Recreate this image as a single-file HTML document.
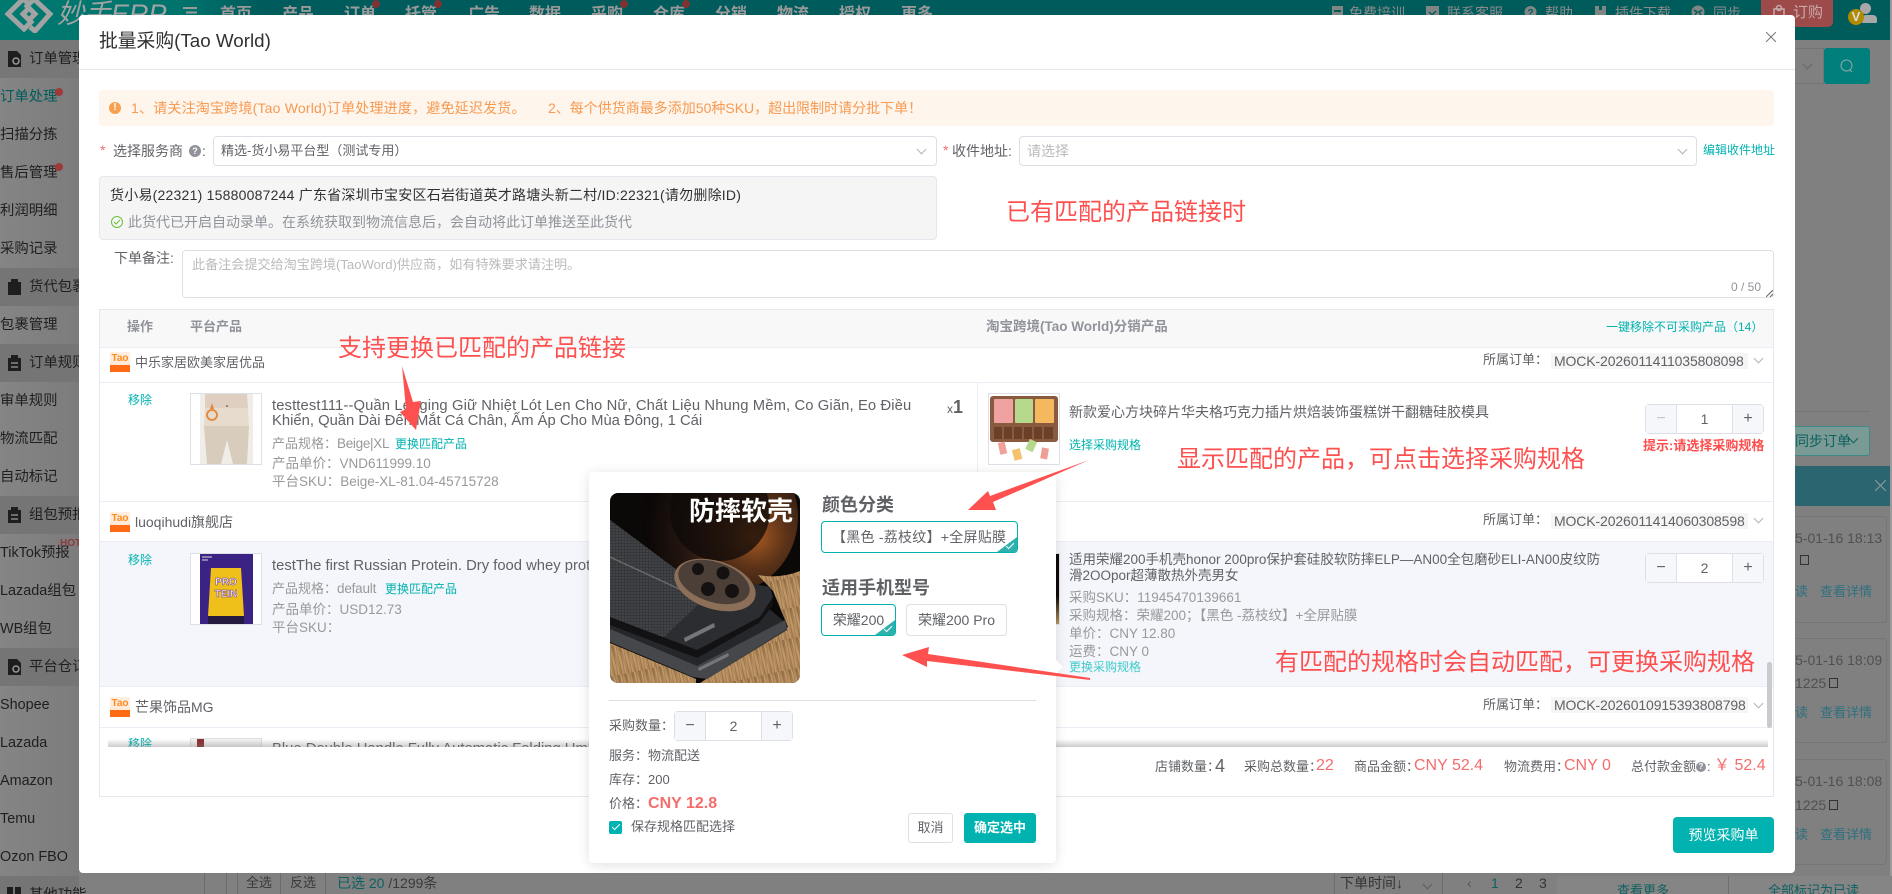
<!DOCTYPE html>
<html lang="zh"><head><meta charset="utf-8"><title>批量采购(Tao World)</title>
<style>
html,body{margin:0;padding:0;width:1892px;height:894px;overflow:hidden;background:#808080}
*{box-sizing:border-box}
body{font-family:"Liberation Sans","Noto Sans CJK SC",sans-serif;position:relative;font-size:14px;color:#606266}
.t{position:absolute;white-space:nowrap;line-height:20px}
.b{position:absolute}
.side{font-size:14.400px;color:#1f1f1f;left:0}
.nav{font-size:16px;color:#9a9a9a;font-weight:700;top:5px}
.dot{position:absolute;width:8px;height:8px;border-radius:50%;background:#7f3232;top:0}
.topi{font-size:14px;color:#8b8b8b;top:3px}
.teal{color:#00b3b0}.gray{color:#999}.red{color:#ff5050}
.g{font-size:13.500px}
.note{font-size:24px;color:#ff5050;line-height:32px;position:absolute;white-space:nowrap;z-index:30}
.tag{position:absolute;background:#f5f5f5;height:16px;line-height:16px;padding-left:3px;font-size:14px;color:#606266;white-space:nowrap;width:197px;left:1551px;letter-spacing:-.12px}
.step{position:absolute;width:119px;height:30px;border:1px solid #dcdfe6;border-radius:4px;background:#fff;text-align:center;line-height:28px;font-size:14px;color:#606266}
.step i{position:absolute;top:0;width:31px;height:28px;background:#f5f7fa;font-style:normal;font-size:16px;color:#606266}
.step i.l{left:0;border-right:1px solid #dcdfe6}.step i.r{right:0;width:31px;border-left:1px solid #dcdfe6}
.tb{position:absolute;width:20px;height:20px;left:110px;background:linear-gradient(#fff1e2 0,#ffe8d6 66%,#ff6a14 66%);overflow:hidden;text-align:center;font:700 10px/13px "Liberation Sans",sans-serif;color:#ff8a20}
.hline{position:absolute;left:100px;width:1673px;height:1px;background:#ebeef5}
.chev{position:absolute;width:7px;height:7px;border-right:1px solid #b0b3b8;border-bottom:1px solid #b0b3b8;transform:rotate(45deg)}
.pic{position:absolute;width:72px;height:72px;border:1px solid #dcdfe6;background:#fff;overflow:hidden}
.card{position:absolute;left:1700px;width:187px;height:107px;border:1px solid #767676;border-radius:4px}
.opt{position:absolute;height:32px;border:1px solid #dcdfe6;border-radius:4px;background:#fff;line-height:30px;font-size:14px;color:#606266;text-align:center;white-space:nowrap;overflow:hidden}
.opt.on{border-color:#00b3b0}
.opt.on:after{content:"";position:absolute;right:0;bottom:0;width:20px;height:15px;background:#2eb0ac;clip-path:polygon(100% 0,100% 100%,0 100%)}
.opt.on:before{content:"";position:absolute;right:3px;bottom:5px;width:7px;height:3px;border-left:1.500px solid #fff;border-bottom:1.500px solid #fff;transform:rotate(-45deg);z-index:2}
</style></head><body>

<!-- dimmed app background -->
<div class="b" style="left:0;top:0;width:1892px;height:40px;background:linear-gradient(90deg,#007a70 0,#00736c 180px,#005c5c 260px,#005b5b 100%)"></div>
<svg class="b" style="left:4px;top:-3px" width="50" height="36" viewBox="0 0 50 36"><path d="M24 6 L19 2 L4 17 L20 32 L27 25 L19 17 L24 12 M26 30 L31 34 L46 17 L30 2 L23 9 L31 17 L26 22" fill="none" stroke="#a3a3a3" stroke-width="5"/></svg>
<div class="t" style="left:57px;top:-2px;font-size:27px;line-height:32px;color:#a3a3a3;font-style:italic">妙手ERP</div>
<svg class="b" style="left:183px;top:7px" width="14" height="12"><path d="M0 1h14M3 5.500h11M0 10h14" stroke="#9a9a9a" stroke-width="2"/></svg>
<div class="t nav" style="left:220px">首页</div><div class="t nav" style="left:282px">产品</div><div class="t nav" style="left:344px">订单</div><div class="t nav" style="left:405px">托管</div><div class="t nav" style="left:468px">广告</div><div class="t nav" style="left:529px">数据</div><div class="t nav" style="left:591px">采购</div><div class="t nav" style="left:653px">仓库</div><div class="t nav" style="left:715px">分销</div><div class="t nav" style="left:777px">物流</div><div class="t nav" style="left:839px">授权</div><div class="t nav" style="left:901px">更多</div>
<i class="dot" style="left:372px"></i><i class="dot" style="left:434px"></i><i class="dot" style="left:620px"></i><i class="dot" style="left:682px"></i>
<svg class="b" style="left:1331px;top:5px" width="13" height="14"><path d="M1 1h11v12H1z" fill="#808684"/><path d="M3 6h7" stroke="#005b5b" stroke-width="2"/></svg><div class="t topi" style="left:1349px">免费培训</div>
<svg class="b" style="left:1426px;top:5px" width="13" height="14"><path d="M0 1h13v12H0z" fill="#808684"/><path d="M3 7l3 3 4-4" stroke="#005b5b" fill="none" stroke-width="1.500"/></svg><div class="t topi" style="left:1447px">联系客服</div>
<svg class="b" style="left:1524px;top:5px" width="13" height="14"><circle cx="6.500" cy="7" r="6" fill="#808684"/><text x="6.500" y="11" font-size="10" font-weight="700" fill="#005b5b" text-anchor="middle" font-family="Liberation Sans">?</text></svg><div class="t topi" style="left:1545px">帮助</div>
<svg class="b" style="left:1594px;top:5px" width="13" height="14"><path d="M1 1h11v12H1z" fill="#808684"/><path d="M5 1h3v4H5z" fill="#005b5b"/></svg><div class="t topi" style="left:1615px">插件下载</div>
<svg class="b" style="left:1691px;top:5px" width="14" height="14"><circle cx="7" cy="7" r="6.500" fill="#808684"/><path d="M3 5l3 2-2 3M11 5L8 7l2 3" stroke="#005b5b" fill="none" stroke-width="1.500"/></svg><div class="t topi" style="left:1713px">同步</div>
<div class="b" style="left:1761px;top:-4px;width:72px;height:31px;background:#9c4a4a;border-radius:5px"></div>
<div class="t" style="left:1793px;top:3px;font-size:15px;color:#c9a8a8">订购</div>
<svg class="b" style="left:1773px;top:4px" width="12" height="15"><path d="M1 5h10v9H1z" fill="none" stroke="#c9a8a8" stroke-width="1.500"/><circle cx="6" cy="4" r="2.500" fill="none" stroke="#c9a8a8" stroke-width="1.500"/></svg>
<div class="b" style="left:1860px;top:3px;width:11px;height:11px;background:#a8a8a8;border-radius:50%"></div>
<div class="b" style="left:1862px;top:15px;width:15px;height:8px;background:#a8a8a8;border-radius:4px 4px 1px 1px"></div>
<div class="b" style="left:1848px;top:9px;width:16px;height:16px;background:#b28a00;border-radius:50%;text-align:center;font:700 13px/16px 'Liberation Sans',sans-serif;color:#ddd">V</div>

<!-- sidebar -->
<div class="b" style="left:0;top:40px;width:79px;height:854px;background:linear-gradient(90deg,#858585,#7c7c7c)"></div>
<div class="b" style="left:0;top:40px;width:79px;height:38px;background:#777"></div>
<div class="b" style="left:0;top:268px;width:79px;height:38px;background:#757575"></div>
<div class="b" style="left:0;top:344px;width:79px;height:38px;background:#757575"></div>
<div class="b" style="left:0;top:496px;width:79px;height:38px;background:#757575"></div>
<div class="b" style="left:0;top:648px;width:79px;height:38px;background:#757575"></div>
<div class="b" style="left:0;top:876px;width:79px;height:18px;background:#757575"></div>
<svg class="b" style="left:7px;top:51px" width="15" height="16"><path d="M1 0h9l4 4v12H1z" fill="#1e1e1e"/><circle cx="9" cy="10" r="3" fill="none" stroke="#999" stroke-width="1.500"/></svg>
<svg class="b" style="left:7px;top:279px" width="15" height="16"><path d="M1 3h13v13H1z M4 0h7v3H4z" fill="#1e1e1e"/></svg>
<svg class="b" style="left:7px;top:355px" width="15" height="16"><path d="M1 3h13v13H1z M4 0h7v3H4z" fill="#1e1e1e"/><path d="M4 8h7M4 12h7" stroke="#888" stroke-width="1.500"/></svg>
<svg class="b" style="left:7px;top:507px" width="15" height="16"><path d="M1 3h13v13H1z M4 0h7v3H4z" fill="#1e1e1e"/><path d="M4 8h7M4 12h7" stroke="#888" stroke-width="1.500"/></svg>
<svg class="b" style="left:7px;top:659px" width="15" height="16"><path d="M1 0h9l4 4v12H1z" fill="#1e1e1e"/><circle cx="9" cy="10" r="3" fill="none" stroke="#999" stroke-width="1.500"/></svg>
<svg class="b" style="left:7px;top:887px" width="15" height="7"><path d="M0 0h6v7H0zM8 0h6v7H8z" fill="#1e1e1e"/></svg>
<div class="t side" style="left:29px;top:49px">订单管理</div>
<div class="t side" style="top:87px;color:#005b5b">订单处理</div><i class="dot" style="left:55px;top:88px;background:#a03a3a"></i>
<div class="t side" style="top:125px">扫描分拣</div>
<div class="t side" style="top:163px">售后管理</div><i class="dot" style="left:55px;top:163px;background:#a03a3a"></i>
<div class="t side" style="top:201px">利润明细</div>
<div class="t side" style="top:239px">采购记录</div>
<div class="t side" style="left:29px;top:277px">货代包裹</div>
<div class="t side" style="top:315px">包裹管理</div>
<div class="t side" style="left:29px;top:353px">订单规则</div>
<div class="t side" style="top:391px">审单规则</div>
<div class="t side" style="top:429px">物流匹配</div>
<div class="t side" style="top:467px">自动标记</div>
<div class="t side" style="left:29px;top:505px">组包预报</div>
<div class="t side" style="top:543px">TikTok预报</div><div class="t" style="left:60px;top:534px;font-size:10px;font-weight:700;color:#8a3a3a;width:19px;overflow:hidden">HOT</div>
<div class="t side" style="top:581px">Lazada组包</div>
<div class="t side" style="top:619px">WB组包</div>
<div class="t side" style="left:29px;top:657px">平台仓订</div>
<div class="t side" style="top:695px">Shopee</div>
<div class="t side" style="top:733px">Lazada</div>
<div class="t side" style="top:771px">Amazon</div>
<div class="t side" style="top:809px">Temu</div>
<div class="t side" style="top:847px">Ozon FBO</div>
<div class="t side" style="left:29px;top:885px">其他功能</div>

<!-- right background -->
<div class="b" style="left:1795px;top:48px;width:29px;height:36px;border:1px solid #747474;border-left:0"></div>
<i class="chev" style="left:1804px;top:61px;border-color:#666"></i>
<div class="b" style="left:1824px;top:48px;width:46px;height:36px;background:#007f7c;border-radius:3px"></div>
<svg class="b" style="left:1840px;top:59px" width="14" height="15"><circle cx="6.500" cy="6.500" r="5.500" fill="none" stroke="#8aa" stroke-width="1"/><path d="M10 11l2 2" stroke="#8aa"/></svg>
<div class="b" style="left:1795px;top:411px;width:75px;height:1px;background:#747474"></div>
<div class="b" style="left:1795px;top:426px;width:75px;height:30px;background:#7a9a96;border:1px solid #3f8a88;border-left:0;border-radius:0 3px 3px 0"></div>
<div class="t" style="left:1795px;top:431px;font-size:14px;color:#0f5f5f">同步订单</div>
<i class="chev" style="left:1850px;top:435px;border-color:#0f5f5f"></i>
<div class="b" style="left:1795px;top:466px;width:95px;height:40px;background:#2a6570"></div>
<svg class="b" style="left:1875px;top:480px" width="11" height="11"><path d="M0 0l11 11M11 0L0 11" stroke="#8f9f9f"/></svg>
<div class="card" style="top:516px"></div><div class="card" style="top:638px;height:105px"></div><div class="card" style="top:759px;height:106px"></div>
<div class="t" style="left:1795px;top:528px;color:#505050">5-01-16 18:13</div>
<div class="b" style="left:1800px;top:555px;width:9px;height:10px;border:1px solid #333"></div>
<div class="t" style="left:1795px;top:582px;font-size:13px;color:#2f6f80">读</div><div class="t" style="left:1820px;top:582px;font-size:13px;color:#2f6f80">查看详情</div>
<div class="t" style="left:1795px;top:650px;color:#505050">5-01-16 18:09</div>
<div class="t" style="left:1795px;top:673px;color:#505050">1225</div><div class="b" style="left:1829px;top:678px;width:9px;height:10px;border:1px solid #333"></div>
<div class="t" style="left:1795px;top:703px;font-size:13px;color:#2f6f80">读</div><div class="t" style="left:1820px;top:703px;font-size:13px;color:#2f6f80">查看详情</div>
<div class="t" style="left:1795px;top:771px;color:#505050">5-01-16 18:08</div>
<div class="t" style="left:1795px;top:795px;color:#505050">1225</div><div class="b" style="left:1829px;top:800px;width:9px;height:10px;border:1px solid #333"></div>
<div class="t" style="left:1795px;top:825px;font-size:13px;color:#2f6f80">读</div><div class="t" style="left:1820px;top:825px;font-size:13px;color:#2f6f80">查看详情</div>
<div class="b" style="left:1890px;top:0;width:2px;height:894px;background:#9a9a9a"></div>

<!-- bottom bar -->
<div class="b" style="left:204px;top:873px;width:1px;height:21px;background:#6c6c6c"></div><div class="b" style="left:226px;top:873px;width:1px;height:21px;background:#6c6c6c"></div>
<div class="b" style="left:237px;top:873px;width:44px;height:21px;border-left:1px solid #6c6c6c;border-right:1px solid #6c6c6c"></div>
<div class="b" style="left:281px;top:873px;width:45px;height:21px;border-right:1px solid #6c6c6c"></div>
<div class="t" style="left:246px;top:873px;font-size:13px;color:#3a3a3a">全选</div><div class="t" style="left:290px;top:873px;font-size:13px;color:#3a3a3a">反选</div>
<div class="t" style="left:337px;top:873px;color:#0f6060">已选 20 <span style="color:#3a3a3a">/1299条</span></div>
<div class="t" style="left:1340px;top:873px;color:#333">下单时间↓</div><i class="chev" style="left:1424px;top:881px;border-color:#5c5c5c"></i>
<div class="b" style="left:1334px;top:873px;width:1px;height:21px;background:#6c6c6c"></div><div class="b" style="left:1442px;top:873px;width:1px;height:21px;background:#6c6c6c"></div>
<div class="t" style="left:1467px;top:873px;color:#555">&lsaquo;</div><div class="t" style="left:1491px;top:873px;color:#0f6060">1</div><div class="t" style="left:1515px;top:873px;color:#333">2</div><div class="t" style="left:1539px;top:873px;color:#333">3</div>
<div class="b" style="left:1557px;top:876px;width:335px;height:18px;background:#858585"></div><div class="b" style="left:1728px;top:876px;width:1px;height:18px;background:#707070"></div>
<div class="t" style="left:1617px;top:881px;font-size:13px;color:#0f6060">查看更多</div><div class="t" style="left:1768px;top:881px;font-size:13px;color:#0f6060">全部标记为已读</div>

<!-- modal -->
<div class="b" style="left:79px;top:15px;width:1716px;height:858px;background:#fff;border-radius:4px"></div>
<div class="t" style="left:99px;top:29px;font-size:18.800px;line-height:24px;color:#303133">批量采购(Tao World)</div>
<div class="b" style="left:79px;top:69px;width:1716px;height:1px;background:#e4e7ed"></div>
<svg class="b" style="left:1766px;top:32px" width="10" height="10"><path d="M0 0l10 10M10 0L0 10" stroke="#777"/></svg>

<div class="b" style="left:99px;top:90px;width:1675px;height:36px;background:#fef5ec;border-radius:3px"></div>
<div class="b" style="left:109px;top:102px;width:12px;height:12px;border-radius:50%;background:#f7a04f;color:#fff;text-align:center;font:700 10px/12px 'Liberation Sans',sans-serif">!</div>
<div class="t" style="left:131px;top:98px;color:#f79a52;letter-spacing:.2px">1、请关注淘宝跨境(Tao World)订单处理进度，避免延迟发货。</div>
<div class="t" style="left:548px;top:98px;color:#f79a52">2、每个供货商最多添加50种SKU，超出限制时请分批下单！</div>

<div class="t red" style="left:100px;top:140px;color:#f56c6c">*</div>
<div class="t" style="left:113px;top:141px;color:#606266">选择服务商</div>
<div class="b" style="left:189px;top:145px;width:12px;height:12px;background:#909399;border-radius:50%;color:#fff;text-align:center;font:700 9px/12px 'Liberation Sans',sans-serif">?</div>
<div class="t" style="left:202px;top:141px">:</div>
<div class="b" style="left:213px;top:136px;width:724px;height:30px;border:1px solid #dcdfe6;border-radius:4px;background:#fff"></div>
<div class="t" style="left:221px;top:141px;color:#606266;font-size:13px">精选-货小易平台型（测试专用）</div><i class="chev" style="left:918px;top:146px"></i>
<div class="t" style="left:943px;top:140px;color:#f56c6c">*</div>
<div class="t" style="left:952px;top:141px;color:#606266">收件地址:</div>
<div class="b" style="left:1019px;top:136px;width:678px;height:30px;border:1px solid #dcdfe6;border-radius:4px;background:#fff"></div>
<div class="t" style="left:1027px;top:141px;color:#bbb">请选择</div><i class="chev" style="left:1679px;top:146px"></i>
<div class="t teal" style="left:1703px;top:140px;font-size:12px">编辑收件地址</div>

<div class="b" style="left:99px;top:176px;width:838px;height:64px;background:#f5f5f5;border:1px solid #e4e7ed;border-radius:4px"></div>
<div class="t" style="left:110px;top:185px;color:#303133;font-size:14px;letter-spacing:.22px">货小易(22321) 15880087244 广东省深圳市宝安区石岩街道英才路塘头新二村/ID:22321(请勿删除ID)</div>
<svg class="b" style="left:111px;top:216px" width="12" height="12"><circle cx="6" cy="6" r="5.500" fill="none" stroke="#67c23a"/><path d="M3 6l2 2 4-4" fill="none" stroke="#67c23a"/></svg>
<div class="t" style="left:128px;top:212px;color:#909399;font-size:14px">此货代已开启自动录单。在系统获取到物流信息后，会自动将此订单推送至此货代</div>

<div class="t" style="left:114px;top:248px;color:#606266">下单备注:</div>
<div class="b" style="left:182px;top:250px;width:1592px;height:48px;border:1px solid #dcdfe6;border-radius:4px"></div>
<div class="t" style="left:192px;top:255px;color:#bbb;font-size:13.100px">此备注会提交给淘宝跨境(TaoWord)供应商，如有特殊要求请注明。</div>
<div class="t" style="left:1731px;top:277px;font-size:12px;color:#909399">0 / 50</div>
<svg class="b" style="left:1766px;top:290px" width="7" height="7"><path d="M0 7L7 0M4 7l3-3" stroke="#666"/></svg>

<!-- table -->
<div class="b" style="left:99px;top:309px;width:1675px;height:488px;border:1px solid #e4e7ed;overflow:hidden;background:#fff"></div>
<div class="b" style="left:100px;top:310px;width:1673px;height:37px;background:#f8f8f9"></div>
<div class="t" style="left:127px;top:317px;font-size:13px;color:#909399;font-weight:700">操作</div>
<div class="t" style="left:190px;top:317px;font-size:13px;color:#909399;font-weight:700">平台产品</div>
<div class="t" style="left:986px;top:317px;font-size:13.500px;color:#909399;font-weight:700">淘宝跨境(Tao World)分销产品</div>
<div class="t teal" style="left:1606px;top:317px;font-size:12px">一键移除不可采购产品（14）</div>
<div class="hline" style="top:347px"></div><div class="hline" style="top:382px"></div><div class="hline" style="top:501px"></div><div class="hline" style="top:541px"></div><div class="hline" style="top:686px"></div><div class="hline" style="top:727px"></div>

<!-- shop 1 -->
<div class="tb" style="top:352px">Tao</div>
<div class="t" style="left:135px;top:353px;font-size:13px">中乐家居欧美家居优品</div>
<div class="t" style="left:1483px;top:350px;font-size:13px">所属订单：</div>
<div class="tag" style="top:353px">MOCK-2026011411035808098</div><i class="chev" style="left:1755px;top:355px"></i>

<div class="t teal" style="left:128px;top:390px;font-size:12px">移除</div>
<div class="pic" style="left:190px;top:393px;"><svg width="70" height="70"><rect x="9" width="53" height="70" fill="#f0ede8"/><path d="M14 0h42l1 14H14z" fill="#dfcfc0"/><path d="M14 14h43l1 18H13z" fill="#e6dbcd"/><path d="M13 32h45l-2 38H42l-6-24-6 24H16z" fill="#d8ccbd"/><circle cx="21" cy="21" r="5" fill="none" stroke="#e5853a" stroke-width="1.800"/><path d="M21 9l2 6h-4z" fill="#e5853a"/><circle cx="36" cy="12" r="1" fill="#8a6a50"/></svg></div>
<div class="t" style="left:272px;top:396px;color:#606266;font-size:14.800px;letter-spacing:.11px">testtest111--Quần Legging Giữ Nhiệt Lót Len Cho Nữ, Chất Liệu Nhung Mềm, Co Giãn, Eo Điều</div>
<div class="t" style="left:272px;top:411px;color:#606266;font-size:14.800px">Khiển, Quần Dài Đến Mắt Cá Chân, Ấm Áp Cho Mùa Đông, 1 Cái</div>
<div class="t gray" style="left:272px;top:434px;font-size:13px">产品规格：<span style="font-size:13.500px;letter-spacing:-.3px">Beige|XL</span></div><div class="t teal" style="left:395px;top:434px;font-size:12px">更换匹配产品</div>
<div class="t gray g" style="left:272px;top:454px">产品单价：VND611999.10</div>
<div class="t gray g" style="left:272px;top:472px">平台SKU：Beige-XL-81.04-45715728</div>
<div class="t" style="left:947px;top:397px;font-size:12px">x<span style="font-size:18px;font-weight:700">1</span></div>
<div class="b" style="left:977px;top:383px;width:1px;height:118px;background:#ebeef5"></div>
<div class="pic" style="left:988px;top:393px"><svg width="70" height="70"><rect x="1" y="2" width="68" height="46" rx="3" fill="#8a5a3f"/><rect x="5" y="5" width="19" height="24" rx="1" fill="#efa2a0"/><rect x="26" y="5" width="18" height="24" rx="1" fill="#b6d98e"/><rect x="46" y="5" width="19" height="24" rx="1" fill="#f4b85e"/><path d="M5 33h8v12H5zM15 33h8v12h-8zM25 33h8v12h-8zM35 33h8v12h-8zM45 33h8v12h-8zM55 33h9v12h-9z" fill="#6b4029"/><rect x="10" y="48" width="7" height="12" fill="#f2a09a" transform="rotate(-12 14 54)"/><rect x="24" y="55" width="8" height="11" fill="#f4c36c" transform="rotate(-15 28 60)"/><rect x="38" y="46" width="8" height="11" fill="#b6d98e" transform="rotate(25 42 52)"/><rect x="52" y="54" width="7" height="11" fill="#ee9f95" transform="rotate(10 56 60)"/></svg></div>
<div class="t" style="left:1069px;top:402px;color:#606266">新款爱心方块碎片华夫格巧克力插片烘焙装饰蛋糕饼干翻糖硅胶模具</div>
<div class="t teal" style="left:1069px;top:435px;font-size:12px">选择采购规格</div>
<div class="step" style="left:1645px;top:404px">1<i class="l" style="color:#c0c4cc">−</i><i class="r">+</i></div>
<div class="t" style="left:1643px;top:436px;font-size:13px;color:#ff4d4d;font-weight:700">提示:请选择采购规格</div>

<!-- shop 2 -->
<div class="tb" style="top:512px">Tao</div>
<div class="t" style="left:135px;top:512px;font-size:14px">luoqihudi旗舰店</div>
<div class="t" style="left:1483px;top:510px;font-size:13px">所属订单：</div>
<div class="tag" style="top:513px">MOCK-2026011414060308598</div><i class="chev" style="left:1755px;top:515px"></i>
<div class="b" style="left:100px;top:542px;width:1673px;height:144px;background:#f4f6fb"></div>
<div class="t teal" style="left:128px;top:550px;font-size:12px">移除</div>
<div class="pic" style="left:190px;top:553px"><svg width="70" height="70"><rect x="9" width="53" height="70" fill="#3b2384"/><path d="M20 14h30l3 48H17z" fill="#f0c01a"/><rect x="17" y="62" width="36" height="8" fill="#241a40"/><text x="35" y="31" font-size="10" font-weight="700" fill="#f3e6ff" stroke="#5a2a90" stroke-width=".4" text-anchor="middle" font-family="Liberation Sans">PRO</text><text x="35" y="43" font-size="10" font-weight="700" fill="#f3e6ff" stroke="#5a2a90" stroke-width=".4" text-anchor="middle" font-family="Liberation Sans">TEIN</text><path d="M11 3h10M11 6h6" stroke="#ddd"/></svg></div>
<div class="t" style="left:272px;top:556px;color:#606266;font-size:14.800px">testThe first Russian Protein. Dry food whey protein</div>
<div class="t gray" style="left:272px;top:579px;font-size:13px">产品规格：<span style="font-size:13.500px;letter-spacing:-.2px">default</span></div><div class="t teal" style="left:385px;top:579px;font-size:12px">更换匹配产品</div>
<div class="t gray g" style="left:272px;top:600px">产品单价：USD12.73</div>
<div class="t gray g" style="left:272px;top:618px">平台SKU：</div>
<div class="pic" style="left:988px;top:553px;border-color:#e2e2e2;background:linear-gradient(#0d0b09 60%,#b8955f)"></div>
<div class="t" style="left:1069px;top:550px;color:#606266;font-size:13.500px">适用荣耀200手机壳honor 200pro保护套硅胶软防摔ELP—AN00全包磨砂ELI-AN00皮纹防</div>
<div class="t" style="left:1069px;top:566px;color:#606266;font-size:13.500px">滑2OOpor超薄散热外壳男女</div>
<div class="t gray g" style="left:1069px;top:588px">采购SKU：11945470139661</div>
<div class="t gray g" style="left:1069px;top:606px">采购规格：荣耀200；【黑色 -荔枝纹】+全屏贴膜</div>
<div class="t gray g" style="left:1069px;top:624px">单价：CNY 12.80</div>
<div class="t gray g" style="left:1069px;top:642px">运费：CNY 0</div>
<div class="t" style="left:1069px;top:657px;font-size:12px;color:#3fcaca">更换采购规格</div>
<div class="step" style="left:1645px;top:553px;background:#fff">2<i class="l">−</i><i class="r">+</i></div>

<!-- shop 3 -->
<div class="tb" style="top:697px">Tao</div>
<div class="t" style="left:135px;top:697px;font-size:14px">芒果饰品MG</div>
<div class="t" style="left:1483px;top:695px;font-size:13px">所属订单：</div>
<div class="tag" style="top:697px">MOCK-2026010915393808798</div><i class="chev" style="left:1755px;top:700px"></i>
<div class="b" style="left:100px;top:728px;width:1673px;height:19px;overflow:hidden">
 <div class="t teal" style="left:28px;top:6px;font-size:12px">移除</div>
 <div class="pic" style="left:90px;top:10px;background:#f4f4f4"><i class="b" style="left:6px;top:0;width:7px;height:30px;background:#8a2d2d"></i></div>
 <div class="t" style="left:172px;top:11px;color:#606266;font-size:14.800px">Blue Double Handle Fully Automatic Folding Umbrella</div>
 <div class="b" style="left:888px;top:10px;width:5px;height:9px;background:#c7ad80"></div>
</div>
<div class="b" style="left:108px;top:739px;width:1660px;height:8px;background:linear-gradient(rgba(120,120,120,0),rgba(120,120,120,.38))"></div>
<div class="b" style="left:1767px;top:662px;width:5px;height:66px;background:#c8cacc;border-radius:3px"></div>

<!-- footer -->
<div class="b" style="left:100px;top:747px;width:1673px;height:49px;background:#fff"></div>
<div class="t" style="left:1155px;top:757px;font-size:13px">店铺数量：</div><div class="t" style="left:1215px;top:756px;font-size:18px;color:#606266">4</div>
<div class="t" style="left:1244px;top:757px;font-size:13px">采购总数量：</div><div class="t" style="left:1316px;top:756px;font-size:16px;color:#f56c6c">22</div>
<div class="t" style="left:1354px;top:757px;font-size:13px">商品金额：</div><div class="t" style="left:1414px;top:756px;font-size:16px;color:#f56c6c">CNY 52.4</div>
<div class="t" style="left:1504px;top:757px;font-size:13px">物流费用：</div><div class="t" style="left:1564px;top:756px;font-size:16px;color:#f56c6c">CNY 0</div>
<div class="t" style="left:1631px;top:757px;font-size:13px">总付款金额</div><div class="b" style="left:1696px;top:762px;width:10px;height:10px;background:#909399;border-radius:50%;color:#fff;text-align:center;font:700 8px/10px 'Liberation Sans',sans-serif">?</div><div class="t" style="left:1707px;top:757px;font-size:13px">:</div>
<div class="t" style="left:1714px;top:756px;font-size:16px;color:#f56c6c">￥ 52.4</div>
<div class="b" style="left:1673px;top:817px;width:101px;height:36px;background:#00b3b0;border-radius:4px;color:#fff;text-align:center;line-height:36px;font-size:14px">预览采购单</div>

<!-- popup -->
<div class="b" style="left:589px;top:472px;width:467px;height:391px;background:#fff;border-radius:4px;box-shadow:0 2px 12px rgba(0,0,0,.12);z-index:10"></div>
<div class="b" style="left:1051px;top:662px;width:10px;height:10px;background:#fff;transform:rotate(45deg);z-index:10"></div>
<div style="position:absolute;left:0;top:0;z-index:11">
<svg class="b" style="left:610px;top:493px;border-radius:8px" width="190" height="190" viewBox="0 0 190 190">
<defs><linearGradient id="w" x1="0" y1="0" x2="1" y2="1"><stop offset="0" stop-color="#8f6a40"/><stop offset=".5" stop-color="#c49c6c"/><stop offset="1" stop-color="#a57d4f"/></linearGradient>
<pattern id="wp" width="30" height="7" patternUnits="userSpaceOnUse" patternTransform="rotate(78)"><rect width="30" height="7" fill="url(#w)"/><path d="M0 2h30M0 5h30" stroke="#6f4e2c" stroke-width=".8" opacity=".5"/></pattern>
<pattern id="lth" width="3" height="3" patternUnits="userSpaceOnUse"><rect width="3" height="3" fill="#36373a"/><circle cx="1" cy="1" r=".7" fill="#55565a"/></pattern>
<radialGradient id="ln" cx=".72" cy=".62" r=".7"><stop offset="0" stop-color="#a85a22"/><stop offset=".3" stop-color="#5a3218"/><stop offset=".65" stop-color="#241610"/><stop offset="1" stop-color="#0a0706"/></radialGradient></defs>
<rect width="190" height="190" fill="#0a0908"/>
<circle cx="110" cy="24" r="78" fill="url(#ln)"/>
<circle cx="110" cy="18" r="50" fill="#0d0a08" opacity=".75"/>
<path d="M190 78V190H90L178 134 163 98 148 82Q170 86 190 78Z" fill="url(#wp)"/>
<path d="M0 150l86 36v4H0z" fill="url(#wp)"/>
<path d="M0 122l157-8 20 17v6l-80 49-14-2L0 149z" fill="#26272a"/>
<path d="M0 136l87 37 88-46 2 9-80 50-14-2L0 149z" fill="#45474a"/>
<path d="M0 27l67 50 93 17 3 10-13 20-63 33L0 124z" fill="#2c2d30"/>
<path d="M0 27l67 50 26 30-42 40L0 124z" fill="url(#lth)"/>
<path d="M0 64l93 43" stroke="#67686a" stroke-width="1.500"/>
<path d="M0 124l87 33 63-33 13-20v8l-14 18-62 35L0 132z" fill="#121214"/>
<ellipse cx="105" cy="92" rx="42" ry="24" transform="rotate(18 105 92)" fill="#8c6f58"/>
<ellipse cx="104" cy="89" rx="37" ry="20" transform="rotate(18 104 89)" fill="#4c3f37"/>
<circle cx="88" cy="76" r="6" fill="#141110"/><circle cx="113" cy="80" r="6.500" fill="#141110"/><circle cx="98" cy="96" r="7" fill="#141110"/><circle cx="122" cy="98" r="7" fill="#141110"/>
<path d="M74 145l30-15 1 4-30 15z" fill="#75767a"/><path d="M88 175l30-15 1 3-30 15z" fill="#75767a"/>
</svg>
<div class="t" style="left:689px;top:495px;font-size:26px;line-height:32px;color:#fff;font-weight:700">防摔软壳</div>
<div class="t" style="left:822px;top:495px;font-size:18px;font-weight:700;color:#5f6165">颜色分类</div>
<div class="opt on" style="left:821px;top:521px;width:197px;text-align:left;padding-left:10px;letter-spacing:.25px">【黑色 -荔枝纹】+全屏贴膜</div>
<div class="t" style="left:822px;top:578px;font-size:18px;font-weight:700;color:#5f6165">适用手机型号</div>
<div class="opt on" style="left:821px;top:604px;width:75px">荣耀200</div>
<div class="opt" style="left:906px;top:604px;width:101px">荣耀200 Pro</div>
<div class="b" style="left:609px;top:700px;width:427px;height:1px;background:#dcdfe6"></div>
<div class="t" style="left:609px;top:716px;font-size:13px">采购数量：</div>
<div class="step" style="left:674px;top:711px;width:119px">2<i class="l">−</i><i class="r">+</i></div>
<div class="t" style="left:609px;top:746px;font-size:13px">服务：物流配送</div>
<div class="t" style="left:609px;top:770px;font-size:13px">库存：200</div>
<div class="t" style="left:609px;top:794px;font-size:13px">价格：<span style="font-size:16px;font-weight:700;color:#f56c6c">CNY 12.8</span></div>
<div class="b" style="left:609px;top:821px;width:13px;height:13px;background:#00b3b0;border-radius:2px"></div>
<div class="b" style="left:612px;top:824px;width:8px;height:4px;border-left:1.500px solid #fff;border-bottom:1.500px solid #fff;transform:rotate(-45deg)"></div>
<div class="t" style="left:631px;top:817px;font-size:13px">保存规格匹配选择</div>
<div class="b" style="left:908px;top:813px;width:45px;height:30px;border:1px solid #dcdfe6;border-radius:3px;text-align:center;line-height:28px;font-size:13px">取消</div>
<div class="b" style="left:964px;top:813px;width:72px;height:30px;background:#00b3b0;border-radius:3px;text-align:center;line-height:30px;font-size:13px;color:#fff;font-weight:700">确定选中</div>
</div>

<!-- annotations -->
<div class="note" style="left:1006px;top:197px">已有匹配的产品链接时</div>
<div class="note" style="left:338px;top:333px">支持更换已匹配的产品链接</div>
<div class="note" style="left:1177px;top:444px">显示匹配的产品，可点击选择采购规格</div>
<div class="note" style="left:1275px;top:647px">有匹配的规格时会自动匹配，可更换采购规格</div>
<svg class="b" style="left:0;top:0;z-index:31" width="1892" height="894">
<polygon points="968,510 988,491 990,496 1089,460 993,502 996,510" fill="#ff5050"/>
<polygon points="902,655 929,647 928,654 1090,678 1090,680 927,661 927,667" fill="#ff5050"/>
<polygon points="402,366 413,402 421,401 416,430 400,412 406,409" fill="#ff5050"/>
</svg>
</body></html>
